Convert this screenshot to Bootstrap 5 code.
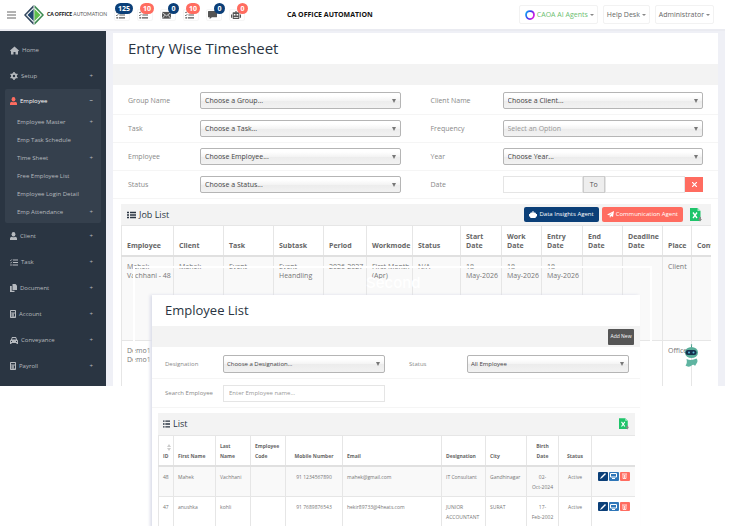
<!DOCTYPE html>
<html lang="en">
<head>
<meta charset="utf-8">
<meta name="viewport" content="width=device-width, initial-scale=1">
<title>CA Office Automation</title>
<link rel="stylesheet" href="https://cdn.jsdelivr.net/npm/bootstrap@5.3.0/dist/css/bootstrap.min.css">
<style>
  body { font-family: "Open Sans", "Noto Sans", sans-serif; font-size: 7px; line-height: 9px; color: #777; background: #fff; min-height: 100vh; overflow: hidden; }
  button, input, select { font-family: inherit; }
  svg { flex: none; }
  .stage { min-height: 100vh; overflow: hidden; }
  .main-window { margin-right: 7px; background: #eff0f6; }

  .topbar { height: 31px; background: #fff; border-bottom: 2px solid #eaebf1; padding: 0 11px 0 7px; }
  .plain-btn { border: 0; background: none; padding: 0; }
  .brand { font: 5px/9px Lato, sans-serif; color: #555; text-decoration: none; gap: 3px; margin-left: 8px; white-space: nowrap; }
  .brand b { color: #111; font-weight: 900; }
  .alerts { gap: 7px; margin-left: 7px; }
  .alert-btn { width: 16px; height: 12px; border: 1px solid #f6f6f6; background: #fff; border-radius: 2px; padding: 0 0 0 1px; color: #555; }
  .pill { position: absolute; left: 7px; top: -7px; min-width: 11px; height: 11px; border-radius: 6px; padding: 0 3px; background: #ff6c60; color: #fff; font-size: 7px; line-height: 11px; font-weight: 700; }
  .pill.navy { background: #0b3f78; }
  .pill.wide { left: 0; }
  .pill.two { left: 2px; }
  .app-name { font-weight: 700; color: #111; margin-left: 42px; }
  .top-menus { gap: 5px; }
  .menu-btn { height: 19px; border: 1px solid #f2f2f2; border-radius: 2px; background: #fff; padding: 0 3px; font-size: 7px; color: #666; gap: 2px; white-space: nowrap; }
  .menu-btn.agents { color: #6cc070; padding-left: 5px; }
  .tri { border: 2px solid transparent; border-top-color: #888; border-bottom: 0; }

  .sidebar { width: 106px; flex: none; background: #2a3542; padding: 6px 5px 6px; font-size: 6px; color: #aeb2b7; }
  .side-item { width: 100%; height: 26px; border: 0; background: none; color: #b6babf; text-decoration: none; padding: 0 8px 0 5px; gap: 3px; text-align: left; }
  .side-group { background: #35404d; border-radius: 2px; padding-bottom: 2px; }
  .side-group .side-head { height: 24px; color: #fff; }
  .side-group .side-sub { height: 18px; padding-left: 12px; }

  .sheet { background: #fff; }
  .content-col { padding: 2px 7px 0; min-width: 0; }
  .page-title { font-size: 15px; line-height: 31px; color: #2a3542; padding-left: 15px; margin: 0; font-weight: 400; }
  .strip { height: 21px; background: #f3f3f3; }
  .filters { padding-top: 2px; }
  .filter-row { height: 28px; padding: 0 15px; gap: 30px; border-bottom: 1px solid #f5f5f5; }
  .filter-row label { width: 72px; flex: none; color: #888; }
  .pick { min-width: 0; height: 17px; font-size: 7px; line-height: 15px; color: #444; border: 1px solid #b5b5b5; border-radius: 2px; padding: 0 4px; appearance: none;
    background: url("data:image/svg+xml,%3Csvg xmlns='http://www.w3.org/2000/svg' width='4' height='4'%3E%3Cpath d='M0 0h4L2 4z' fill='%23777'/%3E%3C/svg%3E") no-repeat right 4px center, linear-gradient(#fff 20%, #f4f4f4 50%, #ececec 52%, #f2f2f2); }
  .pick.dim { color: #999; }
  .box { min-width: 0; height: 17px; border: 1px solid #e5e5e5; font-size: 6px; color: #777; padding: 0 5px; border-radius: 0; }
  .box::placeholder { color: #999; }
  .to { width: 22px; flex: none; height: 17px; line-height: 15px; background: #eee; border: 1px solid #ccc; text-align: center; color: #555; }
  .clear { width: 18px; flex: none; height: 15px; border: 0; background: #ff6c60; padding: 0; }

  .list-panel { margin: 5px 7px 0 8px; overflow: hidden; }
  .panel-head { height: 21px; background: #f3f3f3; padding: 0 9px 0 6px; gap: 3px; color: #2a3542; }
  .panel-head h2 { font-size: 9px; line-height: 12px; margin: 0; font-weight: 400; }
  .act { height: 15px; border: 0; border-radius: 2px; color: #fff; background: #0b3f78; font-size: 6px; padding: 0 5px; gap: 2px; white-space: nowrap; }
  .act.coral { background: #ff6c60; }

  .grid-table { table-layout: fixed; margin: 0; border: 0; color: #777; }
  .grid-table th, .grid-table td { border: 1px solid #e6e6e6; padding: 5px 0 0 5px; color: #777; box-shadow: none; background: #fff; font-size: 7px; line-height: 9px; }
  .grid-table th { vertical-align: bottom; height: 30px; padding: 0 0 5px 5px; border-bottom: 2px solid #e0e0e0; font-weight: 700; color: #666; }
  .grid-table .odd-row td { background: #f9f9f9; }
  .jobs { width: 100%; min-width: 631px; }
  .jobs .odd-row td { height: 85px; }
  .jobs .last-row td { height: 45px; border-bottom: 0; }

  /* floating layers over the main window */
  .outline-frame { position: absolute; left: 133px; right: 80px; top: 266px; height: 260px; border: 2px solid #fff; }
  .outline-word { position: absolute; left: 366px; top: 274px; font: 500 15px/18px Inter, sans-serif; color: #fff; }
  .helper { position: absolute; right: 33px; top: 344px; }
  .front-window { position: absolute; left: 152px; right: 92px; top: 295px; background: #fff; box-shadow: -2px 0 3px #dcdeea; }
  .front-window .page-title { font-size: 13px; padding-left: 13px; }
  .front-window .strip { padding-right: 6px; }
  .front-window .filters { padding-top: 3px; }
  .front-window .filter-row { height: 29px; padding: 0 11px 0 13px; gap: 24px; }
  .front-window .filter-row label { width: 58px; font-size: 6px; }
  .front-window .pick { font-size: 6px; height: 18px; padding: 0 3px; }
  .front-window .list-panel { margin: 5px 5px 0 6px; }
  .front-window .panel-head { padding: 0 6px 0 5px; height: 22px; }
  .front-window .grid-table { width: 100%; }
  .front-window .grid-table th, .front-window .grid-table td { font-size: 5px; line-height: 10px; padding: 5px 0 0 4px; }
  .front-window .grid-table td { height: 31px; }
  .front-window .grid-table th { padding: 0 0 4px 4px; }
  .front-window .grid-table .mid { text-align: center; padding-left: 0; padding-right: 0; }
  .tool-row { gap: 1px; }
  .dark-btn { height: 16px; border: 0; border-radius: 1px; background: #555; color: #fff; font-size: 5px; padding: 0; width: 26px; white-space: nowrap; }
  .tiny { width: 10px; height: 9px; border: 0; border-radius: 1px; padding: 0; background: #0b3f78; }
  .tiny.sky { background: #2f76b8; }
  .tiny.coral { background: #ff6c60; }
</style>
<script src="https://cdn.jsdelivr.net/npm/bootstrap@5.3.0/dist/js/bootstrap.bundle.min.js"></script>
</head>
<body>
<svg class="d-none" xmlns="http://www.w3.org/2000/svg">
  <symbol id="tasks" viewBox="0 0 16 14"><path d="M6 2h10M6 7h10M5 12h11" stroke="currentColor" stroke-width="2.2"/><path d="M0 2l1.500 1.500L4 .500M0 7l1.500 1.500L4 5.500" fill="none" stroke="currentColor" stroke-width="1.500"/><circle cx="2" cy="12" r="1.500" fill="currentColor"/></symbol>
  <symbol id="lines" viewBox="0 0 18 14"><path d="M6 2h12M6 7h12M6 12h12M0 2h4M0 7h4M0 12h4" stroke="currentColor" stroke-width="3"/></symbol>
  <symbol id="mail" viewBox="0 0 16 13"><path d="M0 1h16v12H0z" fill="currentColor"/><path d="M0 2l8 6 8-6M0 13l5-6M16 13l-5-6" fill="none" stroke="#fff" stroke-width="1.300"/></symbol>
  <symbol id="chat" viewBox="0 0 16 14"><path d="M1 0h14q1 0 1 1v9q0 1-1 1H7l-4 3v-3H1q-1 0-1-1V1q0-1 1-1z" fill="currentColor"/></symbol>
  <symbol id="bot" viewBox="0 0 18 14"><path d="M8 0h2v2h4q1 0 1 1v10q0 1-1 1H4q-1 0-1-1V3q0-1 1-1h4zM0 6h2v6H0zM16 6h2v6h-2z" fill="currentColor"/><path d="M5 5h3v3H5zM10 5h3v3h-3zM5 10.500h8v1.500H5z" fill="#fff"/></symbol>
  <symbol id="person" viewBox="0 0 14 16"><ellipse cx="7" cy="4.500" rx="3.800" ry="4.500" fill="currentColor"/><path d="M0 16v-3q0-3 4-3.500 3 2 6 0 4 .500 4 3.500v3z" fill="currentColor"/></symbol>
  <symbol id="calc" viewBox="0 0 12 16"><rect width="12" height="16" rx="1.500" fill="currentColor"/><path d="M2 2h8v3H2zM2 7h2v2H2zM5 7h2v2H5zM8 7h2v6H8zM2 11h2v2H2zM5 11h2v2H5z" fill="#2a3542"/></symbol>
  <symbol id="excel" viewBox="0 0 24 28"><path d="M0 0h15l6 6v20H0z" fill="#1fc46a"/><path d="M15 0l6 6h-6z" fill="#a5ecc6"/><path d="M6 9l8 11M14 9L6 20" stroke="#fff" stroke-width="2.600"/><path d="M18 18h4v4h2l-4 5-4-5h2z" fill="#888"/></symbol>
</svg>

<div class="stage position-relative">
  <div class="main-window">
    <header class="topbar d-flex align-items-center">
      <button class="plain-btn d-flex" type="button" aria-label="Toggle menu"><svg width="9" height="8" viewBox="0 0 9 8"><path d="M0 1h9M0 4h9M0 7h9" stroke="#666"/></svg></button>
      <a class="brand d-flex align-items-center" href="#">
        <svg width="20" height="20" viewBox="0 0 40 40"><path d="M19 0v40L0 20z" fill="#31465d"/><path d="M21 0v40l19-20z" fill="#3c8b52"/><path d="M19 5v30L4 20z" fill="#fff"/><path d="M21 5v30l15-15z" fill="#fff"/><path d="M19 8v24L7 20z" fill="#1e466d"/><path d="M21 8v24l12-12z" fill="#5fbd4d"/></svg>
        <span><b>CA OFFICE</b> AUTOMATION</span>
      </a>
      <div class="alerts d-flex">
        <button class="alert-btn position-relative d-flex align-items-center" type="button" aria-label="Jobs"><svg width="9" height="8"><use href="#tasks"/></svg><span class="pill navy wide">125</span></button>
        <button class="alert-btn position-relative d-flex align-items-center" type="button" aria-label="Tasks"><svg width="9" height="8"><use href="#tasks"/></svg><span class="pill two">10</span></button>
        <button class="alert-btn position-relative d-flex align-items-center" type="button" aria-label="Mail"><svg width="9" height="8"><use href="#mail"/></svg><span class="pill navy">0</span></button>
        <button class="alert-btn position-relative d-flex align-items-center" type="button" aria-label="To do"><svg width="9" height="8"><use href="#tasks"/></svg><span class="pill two">10</span></button>
        <button class="alert-btn position-relative d-flex align-items-center" type="button" aria-label="Chat"><svg width="9" height="8"><use href="#chat"/></svg><span class="pill navy">0</span></button>
        <button class="alert-btn position-relative d-flex align-items-center" type="button" aria-label="Bot"><svg width="10" height="8"><use href="#bot"/></svg><span class="pill">0</span></button>
      </div>
      <div class="app-name">CA OFFICE AUTOMATION</div>
      <div class="top-menus d-flex ms-auto">
        <button class="menu-btn agents d-flex align-items-center" type="button">
          <svg width="10" height="10" viewBox="0 0 20 20"><defs><linearGradient id="ring" x2="1" y2=".5"><stop stop-color="#0bb5f5"/><stop offset=".5" stop-color="#3a3df0"/><stop offset="1" stop-color="#d01be0"/></linearGradient></defs><path d="M10 2q8 0 8 8-1 8-8 8-7 0-8-8 0-8 8-8z" fill="none" stroke="url(#ring)" stroke-width="3.500"/></svg>
          <span>CAOA AI Agents</span><span class="tri"></span></button>
        <button class="menu-btn d-flex align-items-center" type="button"><span>Help Desk</span><span class="tri"></span></button>
        <button class="menu-btn d-flex align-items-center" type="button"><span>Administrator</span><span class="tri"></span></button>
      </div>
    </header>

    <div class="d-flex">
      <nav class="sidebar" aria-label="Main">
        <a class="side-item d-flex align-items-center" href="#"><svg width="9" height="9" viewBox="0 0 18 16"><path d="M9 0l9 8-1 1.500-1-.500v7h-5v-5H7v5H2V9l-1 .500L0 8z" fill="currentColor"/></svg>Home</a>
        <button class="side-item d-flex align-items-center" type="button"><svg width="8" height="8" viewBox="0 0 16 16"><circle cx="8" cy="8" r="4.200" fill="none" stroke="currentColor" stroke-width="3.500"/><path d="M8 0v3M8 13v3M1 4l3 2M12 10l3 2M1 12l3-2M12 6l3-2" stroke="currentColor" stroke-width="3"/></svg>Setup<span class="ms-auto">+</span></button>
        <div class="side-group">
          <button class="side-item side-head d-flex align-items-center" type="button"><svg width="7" height="8" color="#ff6c60"><use href="#person"/></svg>Employee<span class="ms-auto">−</span></button>
          <button class="side-item side-sub d-flex align-items-center" type="button">Employee Master<span class="ms-auto">+</span></button>
          <a class="side-item side-sub d-flex align-items-center" href="#">Emp Task Schedule</a>
          <button class="side-item side-sub d-flex align-items-center" type="button">Time Sheet<span class="ms-auto">+</span></button>
          <a class="side-item side-sub d-flex align-items-center" href="#">Free Employee List</a>
          <a class="side-item side-sub d-flex align-items-center" href="#">Employee Login Detail</a>
          <button class="side-item side-sub d-flex align-items-center" type="button">Emp Attendance<span class="ms-auto">+</span></button>
        </div>
        <button class="side-item d-flex align-items-center" type="button"><svg width="7" height="8"><use href="#person"/></svg>Client<span class="ms-auto">+</span></button>
        <button class="side-item d-flex align-items-center" type="button"><svg width="8" height="7"><use href="#tasks"/></svg>Task<span class="ms-auto">+</span></button>
        <button class="side-item d-flex align-items-center" type="button"><svg width="7" height="8" viewBox="0 0 14 16"><path d="M5 0h6l3 3v9H5z" fill="currentColor"/><path d="M3.500 4H0v12h9v-2.500H3.500z" fill="currentColor"/></svg>Document<span class="ms-auto">+</span></button>
        <button class="side-item d-flex align-items-center" type="button"><svg width="6" height="8"><use href="#calc"/></svg>Account<span class="ms-auto">+</span></button>
        <button class="side-item d-flex align-items-center" type="button"><svg width="8" height="7" viewBox="0 0 16 14"><path d="M4 0h8l2 5 2 2v7h-3v-2H3v2H0V7l2-2zM5 2L4 5h8l-1-3z" fill="currentColor" fill-rule="evenodd"/><path d="M2 8h2v2H2zM12 8h2v2h-2z" fill="#2a3542"/></svg>Conveyance<span class="ms-auto">+</span></button>
        <button class="side-item d-flex align-items-center" type="button"><svg width="6" height="8"><use href="#calc"/></svg>Payroll<span class="ms-auto">+</span></button>
      </nav>

      <main class="content-col flex-fill d-flex flex-column">
        <div class="sheet flex-fill">
          <h1 class="page-title">Entry Wise Timesheet</h1>
          <div class="strip"></div>
          <form class="filters">
            <div class="filter-row d-flex align-items-center">
              <div class="d-flex align-items-center w-50"><label for="group">Group Name</label><select id="group" class="pick flex-fill"><option>Choose a Group...</option></select></div>
              <div class="d-flex align-items-center w-50"><label for="client">Client Name</label><select id="client" class="pick flex-fill"><option>Choose a Client...</option></select></div>
            </div>
            <div class="filter-row d-flex align-items-center">
              <div class="d-flex align-items-center w-50"><label for="task">Task</label><select id="task" class="pick flex-fill"><option>Choose a Task...</option></select></div>
              <div class="d-flex align-items-center w-50"><label for="freq">Frequency</label><select id="freq" class="pick dim flex-fill"><option>Select an Option</option></select></div>
            </div>
            <div class="filter-row d-flex align-items-center">
              <div class="d-flex align-items-center w-50"><label for="emp">Employee</label><select id="emp" class="pick flex-fill"><option>Choose Employee...</option></select></div>
              <div class="d-flex align-items-center w-50"><label for="year">Year</label><select id="year" class="pick flex-fill"><option>Choose Year...</option></select></div>
            </div>
            <div class="filter-row d-flex align-items-center">
              <div class="d-flex align-items-center w-50"><label for="status">Status</label><select id="status" class="pick flex-fill"><option>Choose a Status...</option></select></div>
              <div class="d-flex align-items-center w-50"><label for="from">Date</label><input id="from" class="box flex-fill w-50" type="text"><span class="to">To</span><input class="box flex-fill w-50" type="text" aria-label="To date"><button class="clear d-flex align-items-center justify-content-center" type="button" aria-label="Clear dates"><svg width="5" height="5" viewBox="0 0 5 5"><path d="M0 0l5 5M5 0L0 5" stroke="#fff" stroke-width="1.200"/></svg></button></div>
            </div>
          </form>

          <section class="list-panel">
            <div class="panel-head d-flex align-items-center">
              <svg width="9" height="8"><use href="#lines"/></svg>
              <h2>Job List</h2>
              <button class="act d-flex align-items-center ms-auto" type="button"><svg width="8" height="7" viewBox="0 0 16 14"><path d="M7 0h2v3h3q2 0 2 3h2v5h-2q0 3-2 3H4q-2 0-2-3H0V6h2q0-3 2-3h3z" fill="#fff"/></svg>Data Insights Agent</button>
              <button class="act coral d-flex align-items-center" type="button"><svg width="7" height="7" viewBox="0 0 14 14"><path d="M14 0l-2 12-4-2-2 4-1-5 6-6-7 5.500L0 7z" fill="#fff"/></svg>Communication Agent</button>
              <button class="plain-btn d-flex ms-1" type="button" aria-label="Export to Excel"><svg width="12" height="14"><use href="#excel"/></svg></button>
            </div>
            <table class="table grid-table jobs">
              <colgroup><col width="52"><col width="50"><col width="50"><col width="50"><col width="43"><col width="46"><col width="48"><col width="41"><col width="40"><col width="41"><col width="40"><col width="40"><col width="29"><col></colgroup>
              <thead><tr><th>Employee</th><th>Client</th><th>Task</th><th>Subtask</th><th>Period</th><th>Workmode</th><th>Status</th><th>Start<br>Date</th><th>Work<br>Date</th><th>Entry<br>Date</th><th>End<br>Date</th><th>Deadline<br>Date</th><th>Place</th><th>Conveyance</th></tr></thead>
              <tbody>
                <tr class="odd-row"><td>Mahek<br>Vachhani - 48</td><td>Mahek</td><td>Event</td><td>Event<br>Heandling</td><td>2026-2027</td><td>First Month<br>(Apr)</td><td>N/A</td><td>18-<br>May-2026</td><td>18-<br>May-2026</td><td>18-<br>May-2026</td><td>-</td><td>-</td><td>Client</td><td></td></tr>
                <tr class="last-row"><td>Demo1<br>Demo1 -</td><td></td><td></td><td></td><td></td><td></td><td></td><td></td><td></td><td></td><td></td><td></td><td>Office</td><td></td></tr>
              </tbody>
            </table>
          </section>
        </div>
      </main>
    </div>
  </div>

  <div class="outline-frame"></div>
  <div class="outline-word">Second</div>
  <svg class="helper" width="15" height="24" viewBox="0 0 30 48"><circle cx="15" cy="2" r="1.500" fill="#459c8b"/><path d="M14 3h2v6h-2z" fill="#459c8b"/><ellipse cx="15" cy="17" rx="13" ry="11" fill="#58ad99"/><rect x="3" y="12" width="22" height="10" rx="5" fill="#15304c"/><circle cx="10" cy="17" r="2" fill="#5bb9d8"/><circle cx="19" cy="17" r="2" fill="#5bb9d8"/><path d="M5 30q10 4 20-1 4 5 0 10l-3 5q-3-5-8 0-6 3-11-1 4-5 2-13z" fill="#5fb4a1"/></svg>

  <section class="front-window">
    <h2 class="page-title">Employee List</h2>
    <div class="strip d-flex align-items-center justify-content-end"><button class="dark-btn" type="button">Add New</button></div>
    <form class="filters">
      <div class="filter-row d-flex align-items-center">
        <div class="d-flex align-items-center w-50"><label for="desig">Designation</label><select id="desig" class="pick flex-fill"><option>Choose a Designation...</option></select></div>
        <div class="d-flex align-items-center w-50"><label for="estatus">Status</label><select id="estatus" class="pick flex-fill"><option>All Employee</option></select></div>
      </div>
      <div class="filter-row d-flex align-items-center">
        <div class="d-flex align-items-center w-50"><label for="search">Search Employee</label><input id="search" class="box flex-fill" type="text" placeholder="Enter Employee name..."></div>
        <div class="w-50"></div>
      </div>
    </form>
    <div class="list-panel">
      <div class="panel-head d-flex align-items-center">
        <svg width="7" height="8" viewBox="0 0 18 14" preserveAspectRatio="none"><path d="M6 2h12M6 7h12M6 12h12M0 2h4M0 7h4M0 12h4" stroke="currentColor" stroke-width="2.500"/></svg>
        <h2>List</h2>
        <button class="plain-btn d-flex ms-auto" type="button" aria-label="Export to Excel"><svg width="10" height="12"><use href="#excel"/></svg></button>
      </div>
      <table class="table grid-table">
        <colgroup><col width="15"><col width="42"><col width="35"><col width="35"><col width="57"><col width="99"><col width="44"><col width="41"><col width="32"><col width="33"><col width="44"></colgroup>
        <thead><tr><th><svg class="d-block ms-1" width="4" height="7" viewBox="0 0 4 7"><path d="M0 3l2-3 2 3zM0 4l2 3 2-3z" fill="#ccc"/></svg>ID</th><th>First Name</th><th>Last<br>Name</th><th>Employee<br>Code</th><th class="mid">Mobile Number</th><th>Email</th><th>Designation</th><th>City</th><th class="mid">Birth<br>Date</th><th class="mid">Status</th><th></th></tr></thead>
        <tbody>
          <tr class="odd-row"><td>48</td><td>Mahek</td><td>Vachhani</td><td></td><td class="mid">91 1234567890</td><td>mahek@gmail.com</td><td>IT Consultant</td><td>Gandhinagar</td><td class="mid">02-<br>Oct-2024</td><td class="mid">Active</td>
            <td class="mid"><div class="tool-row d-flex justify-content-center"><button class="tiny d-flex align-items-center justify-content-center" type="button" aria-label="Edit"><svg width="6" height="6" viewBox="0 0 6 6"><path d="M0 6l1-2 4-4 1 1-4 4z" fill="#fff"/></svg></button><button class="tiny sky d-flex align-items-center justify-content-center" type="button" aria-label="View"><svg width="7" height="6" viewBox="0 0 7 6"><path d="M.5.500h6v3.500h-6zM2 5.500h3" fill="none" stroke="#fff"/></svg></button><button class="tiny coral d-flex align-items-center justify-content-center" type="button" aria-label="Delete"><svg width="5" height="6" viewBox="0 0 5 6"><path d="M0 1h5M1 1.500v4h3v-4M2.500 2v3" fill="none" stroke="#fff" stroke-width=".8"/></svg></button></div></td></tr>
          <tr><td>47</td><td>anushka</td><td>kohli</td><td></td><td class="mid">91 7689876543</td><td>hekir89733@4heats.com</td><td>JUNIOR<br>ACCOUNTANT</td><td>SURAT</td><td class="mid">17-<br>Feb-2002</td><td class="mid">Active</td>
            <td class="mid"><div class="tool-row d-flex justify-content-center"><button class="tiny d-flex align-items-center justify-content-center" type="button" aria-label="Edit"><svg width="6" height="6" viewBox="0 0 6 6"><path d="M0 6l1-2 4-4 1 1-4 4z" fill="#fff"/></svg></button><button class="tiny sky d-flex align-items-center justify-content-center" type="button" aria-label="View"><svg width="7" height="6" viewBox="0 0 7 6"><path d="M.5.500h6v3.500h-6zM2 5.500h3" fill="none" stroke="#fff"/></svg></button><button class="tiny coral d-flex align-items-center justify-content-center" type="button" aria-label="Delete"><svg width="5" height="6" viewBox="0 0 5 6"><path d="M0 1h5M1 1.500v4h3v-4M2.500 2v3" fill="none" stroke="#fff" stroke-width=".8"/></svg></button></div></td></tr>
        </tbody>
      </table>
    </div>
  </section>
</div>
</body>
</html>
